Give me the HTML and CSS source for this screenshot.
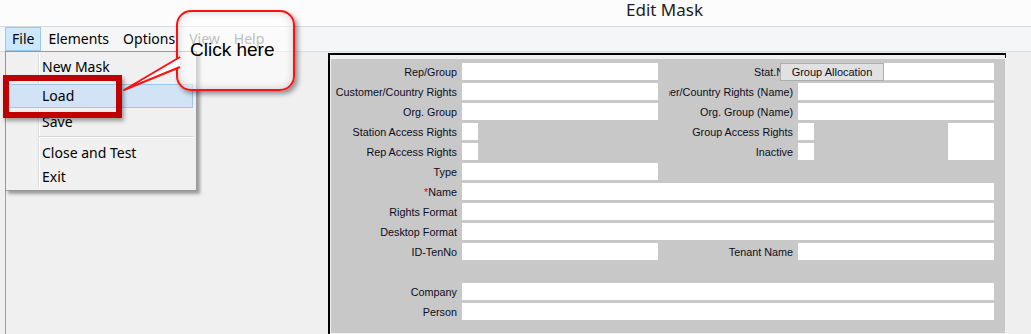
FILE: index.html
```html
<!DOCTYPE html>
<html lang="en">
<head>
    <meta charset="UTF-8">
    <meta name="viewport" content="width=device-width, initial-scale=1">
    <title>Edit Mask</title>
    <link rel="stylesheet" href="styles.css">
</head>
<body>
    <div class="titlebar">Edit Mask</div>

    <div class="menubar">
        <span class="menuItem active">File</span>
        <span class="menuItem">Elements</span>
        <span class="menuItem">Options</span>
        <span class="menuItem disabled">View</span>
        <span class="menuItem disabled">Help</span>
    </div>

    <div class="main">
        <div class="sidePane"></div>
        <div class="panel">
            <div class="formBox">
                <label class="lbl first">Rep/Group</label>
                <div class="field"></div>
                <label class="lbl">Stat.No.</label>
                <div class="field"></div>

                <label class="lbl first">Customer/Country Rights</label>
                <div class="field"></div>
                <label class="lbl clip">Customer/Country Rights (Name)</label>
                <div class="field"></div>

                <label class="lbl first">Org. Group</label>
                <div class="field"></div>
                <label class="lbl">Org. Group (Name)</label>
                <div class="field"></div>

                <label class="lbl first">Station Access Rights</label>
                <div class="field check"></div>
                <label class="lbl">Group Access Rights</label>
                <div class="stackCell">
                    <div class="checks">
                        <div class="field check"></div>
                        <div class="field check"></div>
                    </div>
                    <div class="field bigBox"></div>
                </div>

                <label class="lbl first">Rep Access Rights</label>
                <div class="field check"></div>
                <label class="lbl">Inactive</label>

                <label class="lbl first">Type</label>
                <div class="field"></div>

                <label class="lbl first"><span class="req">*</span>Name</label>
                <div class="field wide"></div>

                <label class="lbl first">Rights Format</label>
                <div class="field wide"></div>

                <label class="lbl first">Desktop Format</label>
                <div class="field wide"></div>

                <label class="lbl first">ID-TenNo</label>
                <div class="field"></div>
                <label class="lbl">Tenant Name</label>
                <div class="field"></div>

                <div class="spacer first"></div>

                <label class="lbl first">Company</label>
                <div class="field wide"></div>

                <label class="lbl first">Person</label>
                <div class="field wide"></div>

                <button class="allocBtn">Group Allocation</button>
            </div>
        </div>
        <div class="rest"></div>
    </div>

    <!-- opened File menu -->
    <ul class="dropMenu">
        <li class="item first">New Mask</li>
        <li class="item hover">Load</li>
        <li class="item save">Save</li>
        <li class="sep"></li>
        <li class="item">Close and Test</li>
        <li class="item">Exit</li>
    </ul>

    <!-- annotation -->
    <div class="marker"></div>
    <div class="callout">Click here</div>
    <svg class="tail" width="62" height="46" viewBox="0 0 62 46">
        <polygon points="60,7 4,40 60,17" fill="#ffffff"/>
        <polyline points="60,7 4,40 60,17" fill="none" stroke="#ff1010" stroke-width="2" stroke-linejoin="round"/>
    </svg>
</body>
</html>
```

FILE: styles.css
```css
html, body {
    margin: 0;
    height: 334px;
    overflow: hidden;
}
body {
    background: #f0f0f0;
    font-family: "Noto Sans", "Open Sans", sans-serif;
    position: relative;
}

/* window title */
.titlebar {
    height: 26px;
    line-height: 19px;
    padding-left: 626px;
    background: #fcfcfc;
    border-bottom: 1px solid #d9d9d9;
    font-size: 17px;
    color: #1e1e1e;
}

/* menu bar */
.menubar {
    display: flex;
    height: 24px;
    padding-left: 5px;
    background: #f5f6f7;
    border-bottom: 1px solid #dadbdc;
}
.menubar .menuItem {
    padding: 0 6px;
    line-height: 22px;
    border: 1px solid transparent;
    font-size: 14px;
    color: #000;
}
.menubar .menuItem.active {
    background: #cce8ff;
    border-color: #99c9ef;
}
.menubar .menuItem.disabled {
    color: #707070;
}

/* body of the window */
.main {
    display: flex;
    height: 282px;
    background: #f0f0f0;
}
.sidePane {
    flex: none;
    width: 322px;
    margin-left: 5px;
    background: #f0f0f0;
    border-left: 1px solid #a0a0a0;
}
.panel {
    flex: none;
    position: relative;
    width: 674px;
    margin-top: 1px;
    padding: 4px 0 0 1px;
    border-top: 2px solid #000;
    border-left: 2px solid #000;
    background: #f0f0f0;
}
.panel::after {
    content: "";
    position: absolute;
    right: -1px;
    top: -2px;
    width: 1px;
    height: 5px;
    background: #000;
}
.rest {
    flex: 1;
    background: #efefef;
}
.formBox {
    position: relative;
    box-sizing: border-box;
    width: 674px;
    height: 274px;
    padding-top: 4px;
    background: #c8c8c8;
    display: grid;
    grid-template-columns: 131px 196px 140px 196px;
    grid-auto-rows: 17px;
    row-gap: 3px;
    align-content: start;
    font-family: "Liberation Sans", Arial, sans-serif;
    font-size: 10.8px;
    color: #0c0c1c;
}
.formBox .lbl {
    display: flex;
    align-items: center;
    justify-content: flex-end;
    padding-right: 5px;
    white-space: nowrap;
    overflow: hidden;
}
.formBox .first {
    grid-column: 1;
}
.formBox .clip {
    margin-left: 11px;
}
.formBox .req {
    color: #e00000;
}
.formBox .field {
    background: #fff;
}
.formBox .field.wide {
    grid-column: span 3;
}
.formBox .field.check {
    width: 16px;
    height: 17px;
}
.formBox .stackCell {
    grid-row: span 2;
    display: flex;
    justify-content: space-between;
}
.formBox .checks {
    display: flex;
    flex-direction: column;
    gap: 3px;
}
.formBox .bigBox {
    width: 46px;
}
.formBox .allocBtn {
    position: absolute;
    left: 449px;
    top: 4px;
    width: 104px;
    height: 18px;
    padding: 0;
    background: #e1e1e1;
    border: 1px solid #adadad;
    font-family: "Liberation Sans", Arial, sans-serif;
    font-size: 11px;
    color: #0c0c1c;
}

/* dropped File menu */
.dropMenu {
    position: absolute;
    left: 5px;
    top: 51px;
    box-sizing: border-box;
    width: 192px;
    height: 140px;
    margin: 0;
    padding: 3px 3px 2px 2px;
    list-style: none;
    background: #f0f0f0;
    border: 1px solid #979797;
    box-shadow: 3px 3px 3px rgba(0, 0, 0, 0.35);
    font-size: 14px;
    color: #000;
}
.dropMenu::before {
    content: "";
    position: absolute;
    left: 32px;
    top: 2px;
    bottom: 2px;
    width: 1px;
    background: #dcdcdc;
    border-right: 1px solid #fff;
}
.dropMenu .item {
    position: relative;
    padding-left: 33px;
    line-height: 22px;
    border: 1px solid transparent;
}
.dropMenu .item.hover {
    margin-top: 5px;
    background: #d1e3f4;
    border-color: #9fc5ec;
}
.dropMenu .item.save {
    margin-top: 2px;
}
.dropMenu .sep {
    position: relative;
    height: 1px;
    margin: 2px 0 3px 31px;
    background: #d7d7d7;
    border-bottom: 1px solid #fff;
}

/* red frame round Load */
.marker {
    position: absolute;
    left: 3px;
    top: 75px;
    box-sizing: border-box;
    width: 119px;
    height: 43px;
    border: 6px solid #c00000;
    box-shadow: 2px 3px 4px rgba(0, 0, 0, 0.35);
}

/* speech bubble */
.callout {
    position: absolute;
    left: 176px;
    top: 10px;
    box-sizing: border-box;
    width: 119px;
    height: 81px;
    padding: 27px 0 0 12px;
    border: 2px solid #ff1010;
    border-radius: 15px;
    background: rgba(255, 255, 255, 0.55);
    box-shadow: 3px 3px 5px rgba(0, 0, 0, 0.4), inset 0 0 8px rgba(0, 0, 0, 0.18);
    font-family: "Liberation Sans", Arial, sans-serif;
    font-size: 19px;
    line-height: 22px;
    color: #000;
}
.tail {
    position: absolute;
    left: 120px;
    top: 50px;
}
```
